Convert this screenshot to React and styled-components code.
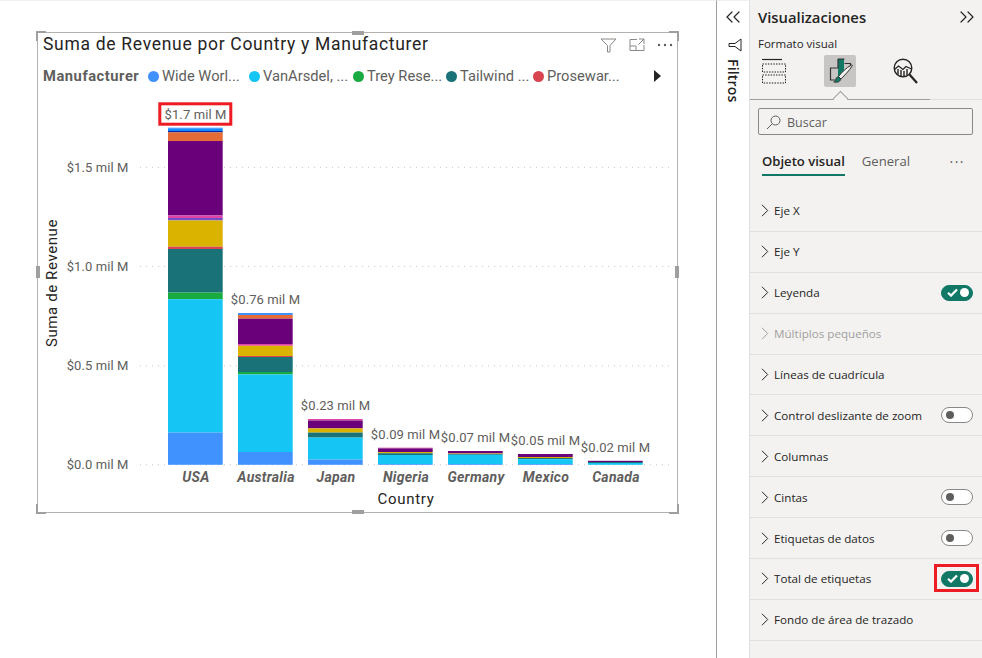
import React from "react";
import styled, { createGlobalStyle } from "styled-components";
import { ChevronsLeft, ChevronsRight } from "lucide-react";

const GlobalStyle = createGlobalStyle`
  html, body {
    margin: 0;
    padding: 0;
    height: 100%;
    background: #fff;
    overflow: hidden;
  }
  #root {
    height: 100%;
  }
`;

const chartFont = `Roboto, "Liberation Sans", sans-serif`;
const paneFont = `"Open Sans", "Noto Sans", sans-serif`;

const COLORS = {
  sky: "#118dff",
  navy: "#12239e",
  orange: "#e66c37",
  purple: "#6b007b",
  pink: "#e044a7",
  violet: "#744ec2",
  yellow: "#d9b300",
  red: "#d64550",
  teal: "#197278",
  green: "#1aab40",
  cyan: "#15c6f4",
  blue: "#4092ff",
};

// y stops are the top edge of each segment, last value is the baseline
const BASE = 464.8;
const countries = [
  {
    name: "USA",
    label: "$1.7 mil M",
    labelY: 114,
    segments: [
      ["blue", 127.7],
      ["sky", 128.8],
      ["navy", 131],
      ["orange", 132.4],
      ["purple", 141],
      ["pink", 215.5],
      ["violet", 218],
      ["yellow", 220.5],
      ["red", 246.7],
      ["teal", 249],
      ["green", 292.6],
      ["cyan", 299.2],
      ["blue", 432.6],
    ],
  },
  {
    name: "Australia",
    label: "$0.76 mil M",
    labelY: 299.5,
    segments: [
      ["blue", 313],
      ["orange", 315],
      ["purple", 318.7],
      ["pink", 344],
      ["yellow", 345.8],
      ["red", 356],
      ["teal", 357],
      ["green", 372],
      ["cyan", 374.4],
      ["blue", 452],
    ],
  },
  {
    name: "Japan",
    label: "$0.23 mil M",
    labelY: 405.5,
    segments: [
      ["pink", 419],
      ["purple", 420.5],
      ["yellow", 428.4],
      ["teal", 432.6],
      ["cyan", 437.6],
      ["blue", 459.6],
    ],
  },
  {
    name: "Nigeria",
    label: "$0.09 mil M",
    labelY: 434.5,
    segments: [
      ["pink", 447.7],
      ["purple", 448.4],
      ["yellow", 452],
      ["teal", 453.2],
      ["cyan", 455],
      ["blue", 464],
    ],
  },
  {
    name: "Germany",
    label: "$0.07 mil M",
    labelY: 437.5,
    segments: [
      ["purple", 451],
      ["yellow", 453.5],
      ["teal", 454],
      ["cyan", 454.8],
      ["blue", 464],
    ],
  },
  {
    name: "Mexico",
    label: "$0.05 mil M",
    labelY: 440.5,
    segments: [
      ["purple", 454],
      ["yellow", 457],
      ["teal", 458],
      ["cyan", 459.2],
      ["blue", 464],
    ],
  },
  {
    name: "Canada",
    label: "$0.02 mil M",
    labelY: 447.5,
    segments: [
      ["purple", 460.8],
      ["teal", 462],
      ["cyan", 463],
    ],
  },
];

const ticks = [
  { label: "$0.0 mil M", y: 464.8 },
  { label: "$0.5 mil M", y: 365.8 },
  { label: "$1.0 mil M", y: 266.4 },
  { label: "$1.5 mil M", y: 167.4 },
];

const legend = [
  { color: COLORS.blue, name: "Wide Worl...", width: 101 },
  { color: COLORS.cyan, name: "VanArsdel, ...", width: 104 },
  { color: COLORS.green, name: "Trey Rese...", width: 93 },
  { color: COLORS.teal, name: "Tailwind ...", width: 87 },
  { color: COLORS.red, name: "Prosewar...", width: 84 },
];

const rows = [
  { name: "Eje X" },
  { name: "Eje Y" },
  { name: "Leyenda", toggle: "on" },
  { name: "Múltiplos pequeños", disabled: true },
  { name: "Líneas de cuadrícula" },
  { name: "Control deslizante de zoom", toggle: "off" },
  { name: "Columnas" },
  { name: "Cintas", toggle: "off" },
  { name: "Etiquetas de datos", toggle: "off" },
  { name: "Total de etiquetas", toggle: "on", marked: true },
  { name: "Fondo de área de trazado" },
];

const Page = styled.div`
  display: flex;
  width: 982px;
  height: 658px;
  overflow: hidden;
`;

const Canvas = styled.main`
  width: 716px;
  flex-shrink: 0;
  padding: 32px 0 0 37px;
  box-sizing: border-box;
  background: #fff;
  border-top: 1px solid #f0f0f0;
`;

const Visual = styled.section`
  position: relative;
  width: 641px;
  height: 481px;
  box-sizing: border-box;
  margin-top: -1px;
  border: 1px solid #b3b0ad;
  font-family: ${chartFont};
  display: flex;
  flex-direction: column;
`;

const VisualHeader = styled.header`
  display: flex;
  align-items: center;
  justify-content: space-between;
  height: 24px;
  padding: 0 4px 0 5px;
`;

const VisualTitle = styled.h2`
  margin: 0 0 2px;
  font-size: 17.5px;
  font-weight: 400;
  letter-spacing: 0.7px;
  color: #252423;
  white-space: nowrap;
`;

const VisualTools = styled.div`
  display: flex;
  align-items: center;
  gap: 12px;
`;

const Legend = styled.div`
  display: flex;
  align-items: center;
  height: 20px;
  margin-top: 9px;
  padding-left: 5px;
  font-size: 14.7px;
  color: #605e5c;
  white-space: nowrap;
`;

const LegendTitle = styled.strong`
  width: 105px;
  flex-shrink: 0;
  font-weight: 700;
  letter-spacing: 0.55px;
`;

const LegendItem = styled.span`
  display: flex;
  align-items: center;
  gap: 3px;
  flex-shrink: 0;
  width: ${(p) => p.$width}px;
`;

const LegendDot = styled.i`
  width: 11px;
  height: 11px;
  flex-shrink: 0;
  border-radius: 50%;
  background: ${(p) => p.$color};
`;

const LegendNext = styled.span`
  width: 0;
  height: 0;
  margin-left: 37px;
  border-left: 7px solid #252423;
  border-top: 6px solid transparent;
  border-bottom: 6px solid transparent;
`;

const ChartSvg = styled.svg`
  display: block;
  margin-top: 7px;
  flex-shrink: 0;
`;

const Handle = styled.i`
  position: absolute;
  background: #a19f9d;
  ${(p) => p.$side === "top" && "top: -2px; left: 314px; width: 12px; height: 4px;"}
  ${(p) => p.$side === "bottom" && "bottom: -2px; left: 314px; width: 12px; height: 4px;"}
  ${(p) => p.$side === "left" && "left: -2px; top: 233px; width: 4px; height: 12px;"}
  ${(p) => p.$side === "right" && "right: -2px; top: 233px; width: 4px; height: 12px;"}
`;

const Corner = styled.i`
  position: absolute;
  width: 10px;
  height: 10px;
  box-sizing: border-box;
  border: 0 solid #a19f9d;
  ${(p) => (p.$v === "top" ? "top: -2px; border-top-width: 2px;" : "bottom: -2px; border-bottom-width: 2px;")}
  ${(p) => (p.$h === "left" ? "left: -2px; border-left-width: 2px;" : "right: -2px; border-right-width: 2px;")}
`;

const FilterStrip = styled.aside`
  width: 32px;
  flex-shrink: 0;
  display: flex;
  flex-direction: column;
  align-items: center;
  background: #fff;
  border-left: 1px solid #a19f9d;
  border-right: 1px solid #e1dfdd;
  border-top: 1px solid #f0f0f0;
  padding-top: 4px;
  color: #252423;
`;

const FilterLabel = styled.span`
  writing-mode: vertical-rl;
  margin-top: 7px;
  font-family: ${paneFont};
  font-size: 14px;
  font-weight: 600;
  letter-spacing: 0.2px;
  color: #252423;
`;

const FilterIcon = styled.svg`
  margin: 9px 0 0 3px;
`;

const Pane = styled.aside`
  flex: 1;
  min-width: 0;
  background: #f3f2f1;
  border-top: 1px solid #f0f0f0;
  font-family: ${paneFont};
  color: #252423;
`;

const PaneHeader = styled.div`
  display: flex;
  align-items: center;
  justify-content: space-between;
  height: 32px;
  padding: 0 3px 0 8px;
`;

const PaneTitle = styled.h1`
  margin: 0;
  font-size: 14.8px;
  font-weight: 600;
  color: #252423;
`;

const SubTitle = styled.div`
  margin: 3px 0 0 8px;
  font-size: 11.5px;
  line-height: 16px;
  font-weight: 500;
`;

const BuildTabs = styled.div`
  position: relative;
  display: flex;
  align-items: flex-start;
  height: 44px;
  padding: 3px 0 0 8px;
  border-bottom: 1px solid #e1dfdd;
`;

const BuildTabLine = styled.span`
  position: absolute;
  left: 0;
  bottom: -1px;
  width: 180px;
  height: 1px;
  background: #a19f9d;
`;

const Notch = styled.span`
  position: absolute;
  left: 85px;
  bottom: -5px;
  width: 11px;
  height: 11px;
  box-sizing: border-box;
  background: #f3f2f1;
  border-top: 1px solid #a19f9d;
  border-left: 1px solid #a19f9d;
  transform: rotate(45deg);
`;

const BuildTab = styled.div`
  width: 32px;
  height: 32px;
  display: flex;
  align-items: center;
  justify-content: center;
  margin-right: ${(p) => p.$gap}px;
  background: ${(p) => (p.$active ? "#c8c6c4" : "transparent")};
  border-radius: 2px;
`;

const SearchBox = styled.div`
  display: flex;
  align-items: center;
  gap: 6px;
  width: 215px;
  height: 27px;
  margin: 8px 0 0 8px;
  padding: 1px 0 0 7px;
  box-sizing: border-box;
  border: 1px solid #8a8886;
  border-radius: 2px;
  font-size: 12.5px;
  color: #605e5c;
`;

const Tabs = styled.div`
  position: relative;
  display: flex;
  gap: 17px;
  margin: 14px 0 0 12px;
  height: 27px;
  font-size: 13.1px;
`;

const Tab = styled.div`
  height: 25px;
  line-height: 24px;
  color: ${(p) => (p.$active ? "#252423" : "#605e5c")};
  font-weight: ${(p) => (p.$active ? 600 : 400)};
  border-bottom: 2px solid ${(p) => (p.$active ? "#117865" : "transparent")};
`;

const TabMore = styled.span`
  position: absolute;
  right: 17px;
  top: 0;
  line-height: 18px;
  letter-spacing: 1.5px;
  font-size: 14px;
  color: #605e5c;
`;

const RowList = styled.div`
  margin-top: 15px;
`;

const Row = styled.div`
  display: flex;
  align-items: center;
  height: 40.9px;
  padding: 0 9px 0 11px;
  box-sizing: border-box;
  border-bottom: 1px solid #e1dfdd;
  font-size: 11.65px;
  font-weight: 500;
  color: ${(p) => (p.$disabled ? "#a19f9d" : "#252423")};
`;

const RowChevron = styled.svg`
  flex-shrink: 0;
  margin-right: 5px;
`;

const RowName = styled.span`
  flex: 1;
  white-space: nowrap;
`;

const ToggleTrack = styled.span`
  position: relative;
  display: flex;
  align-items: center;
  justify-content: space-between;
  width: 32px;
  height: 16px;
  padding: 0 3px 0 5px;
  box-sizing: border-box;
  border-radius: 8px;
  background: ${(p) => (p.$on ? "#117865" : "#fff")};
  border: 1px solid ${(p) => (p.$on ? "#117865" : "#8a8886")};
  ${(p) =>
    p.$marked &&
    `&::after {
      content: "";
      position: absolute;
      left: -8px;
      right: -7px;
      top: -8px;
      bottom: -6px;
      border: 3px solid #ed1c24;
    }`}
`;

const ToggleDot = styled.i`
  width: ${(p) => (p.$on ? 9 : 8)}px;
  height: ${(p) => (p.$on ? 9 : 8)}px;
  border-radius: 50%;
  background: ${(p) => (p.$on ? "#fff" : "#605e5c")};
  margin-left: ${(p) => (p.$on ? 0 : "-1px")};
`;

function Toggle({ on, marked }) {
  return (
    <ToggleTrack $on={on} $marked={marked}>
      {on ? (
        <>
          <svg width="11" height="9" viewBox="0 0 11 9">
            <path d="M1 4.800 4 7.600 10 1.400" fill="none" stroke="#fff" strokeWidth="2.200" />
          </svg>
          <ToggleDot $on />
        </>
      ) : (
        <ToggleDot />
      )}
    </ToggleTrack>
  );
}

function BarChart() {
  return (
    <ChartSvg viewBox="38 93 639 419" width="639" height="419">
      {ticks.map((t) => (
        <g key={t.label}>
          <line x1="140" x2="674" y1={t.y} y2={t.y} stroke="#c8c6c4" strokeWidth="1" strokeDasharray="1 5" />
          <text x="128.500" y={t.y + 4.500} textAnchor="end" fontSize="13" letterSpacing="0.1" fill="#605e5c">
            {t.label}
          </text>
        </g>
      ))}
      <text
        transform="translate(57 283) rotate(-90)"
        textAnchor="middle"
        fontSize="15"
        letterSpacing="0.6"
        fill="#252423"
      >
        Suma de Revenue
      </text>
      {countries.map((c, i) => {
        const x = 168 + i * 70;
        return (
          <g key={c.name}>
            {c.segments.map(([color, top], j) => {
              const next = j + 1 < c.segments.length ? c.segments[j + 1][1] : BASE;
              return <rect key={j} x={x} y={top} width="54.700" height={next - top} fill={COLORS[color]} />;
            })}
            <text x={x + 27.500} y={c.labelY + 4.500} textAnchor="middle" fontSize="13" letterSpacing="0.1" fill="#605e5c">
              {c.label}
            </text>
            <text
              x={x + 28}
              y="482"
              textAnchor="middle"
              fontSize="14"
              fontWeight="700"
              fontStyle="italic"
              letterSpacing="0.3"
              fill="#605e5c"
            >
              {c.name}
            </text>
          </g>
        );
      })}
      <text x="406" y="504" textAnchor="middle" fontSize="15" letterSpacing="0.7" fill="#252423">
        Country
      </text>
      <rect x="159.800" y="103.800" width="71" height="20.400" fill="none" stroke="#ed1c24" strokeWidth="3" />
    </ChartSvg>
  );
}

function TableIcon() {
  return (
    <svg width="26" height="26" viewBox="0 0 26 26" fill="none" stroke="#252423" strokeWidth="1">
      <path d="M1 1.500h20" strokeWidth="1.200" />
      <rect x="1.500" y="6" width="23" height="8" strokeDasharray="1.500 1.200" />
      <rect x="1.500" y="17" width="23" height="8" strokeDasharray="1.500 1.200" />
    </svg>
  );
}

function FormatIcon() {
  return (
    <svg width="28" height="28" viewBox="0 0 28 28" fill="none">
      <path d="M12 2h6v18h-6z" fill="#117865" />
      <path d="M12 2h6.500M4 11h8M4.500 11v12h5M18.500 6.500h6v4M12 2v9" stroke="#323130" strokeWidth="1.200" />
      <path d="M12.500 19.500C16 15 20 11 25.500 8c.6-.3 1 .3.700.8C23 14 19 18 14.800 22z" fill="#f3f2f1" stroke="#323130" strokeWidth="1" />
      <path d="M14.800 22 12.500 19.500c-2 .5-2.500 2-2.800 3.200-.2 1-1 1.800-2 2.300 2.500.8 6.500.3 7.100-3z" fill="#117865" stroke="#323130" strokeWidth="0.800" />
    </svg>
  );
}

function AnalyticsIcon() {
  return (
    <svg width="26" height="26" viewBox="0 0 26 26" fill="none" stroke="#252423">
      <circle cx="10" cy="10" r="8.800" strokeWidth="1.400" />
      <path d="M16.500 16.500 24 25" strokeWidth="2.200" />
      <path d="M1.500 11.500 5.500 8 10 11.500 13 8.500l5.500 2.500" strokeWidth="1.300" />
      <path d="M5 11v5.500M8 12v6M11 13v5.500M14 11v6" strokeWidth="1.400" />
    </svg>
  );
}

export default function App() {
  return (
    <Page>
      <GlobalStyle />
      <Canvas>
        <Visual>
          <VisualHeader>
            <VisualTitle>Suma de Revenue por Country y Manufacturer</VisualTitle>
            <VisualTools>
              <svg width="17" height="15" viewBox="0 0 17 15" fill="none" stroke="#8a8886">
                <path d="M1 1h15l-6 6.500V14H7.500V7.500z" />
              </svg>
              <svg width="16" height="14" viewBox="0 0 16 14" fill="none" stroke="#8a8886">
                <path d="M8 1.500H1v11h14V7M1 8h6v4.500M10 1h5v5M15 1 9.500 6.500" />
              </svg>
              <svg width="16" height="4" viewBox="0 0 16 4" fill="#605e5c">
                <circle cx="2" cy="2" r="1.200" />
                <circle cx="8" cy="2" r="1.200" />
                <circle cx="14" cy="2" r="1.200" />
              </svg>
            </VisualTools>
          </VisualHeader>
          <Legend>
            <LegendTitle>Manufacturer</LegendTitle>
            {legend.map((l) => (
              <LegendItem key={l.name} $width={l.width}>
                <LegendDot $color={l.color} />
                {l.name}
              </LegendItem>
            ))}
            <LegendNext />
          </Legend>
          <BarChart />
          <Corner $v="top" $h="left" />
          <Corner $v="top" $h="right" />
          <Corner $v="bottom" $h="left" />
          <Corner $v="bottom" $h="right" />
          <Handle $side="top" />
          <Handle $side="bottom" />
          <Handle $side="left" />
          <Handle $side="right" />
        </Visual>
      </Canvas>
      <FilterStrip>
        <ChevronsLeft size={24} strokeWidth={1.200} />
        <FilterIcon width="14" height="14" viewBox="0 0 14 14" fill="none" stroke="#252423">
          <path d="M13 1v12L7 8.500H1v-3h6z" />
        </FilterIcon>
        <FilterLabel>Filtros</FilterLabel>
      </FilterStrip>
      <Pane>
        <PaneHeader>
          <PaneTitle>Visualizaciones</PaneTitle>
          <ChevronsRight size={24} strokeWidth={1.200} />
        </PaneHeader>
        <SubTitle>Formato visual</SubTitle>
        <BuildTabs>
          <BuildTab $gap={34}>
            <TableIcon />
          </BuildTab>
          <BuildTab $gap={34} $active>
            <FormatIcon />
          </BuildTab>
          <BuildTab $gap={0}>
            <AnalyticsIcon />
          </BuildTab>
          <BuildTabLine />
          <Notch />
        </BuildTabs>
        <SearchBox>
          <svg width="15" height="15" viewBox="0 0 15 15" fill="none" stroke="#605e5c">
            <circle cx="9.500" cy="5.500" r="4.500" />
            <path d="M6.200 8.800 1 14" />
          </svg>
          Buscar
        </SearchBox>
        <Tabs>
          <Tab $active>Objeto visual</Tab>
          <Tab>General</Tab>
          <TabMore>...</TabMore>
        </Tabs>
        <RowList>
          {rows.map((r) => (
            <Row key={r.name} $disabled={r.disabled}>
              <RowChevron width="8" height="13" viewBox="0 0 8 13" fill="none" stroke="currentColor">
                <path d="M1 .8 6.700 6.500 1 12.200" />
              </RowChevron>
              <RowName>{r.name}</RowName>
              {r.toggle && <Toggle on={r.toggle === "on"} marked={r.marked} />}
            </Row>
          ))}
        </RowList>
      </Pane>
    </Page>
  );
}
